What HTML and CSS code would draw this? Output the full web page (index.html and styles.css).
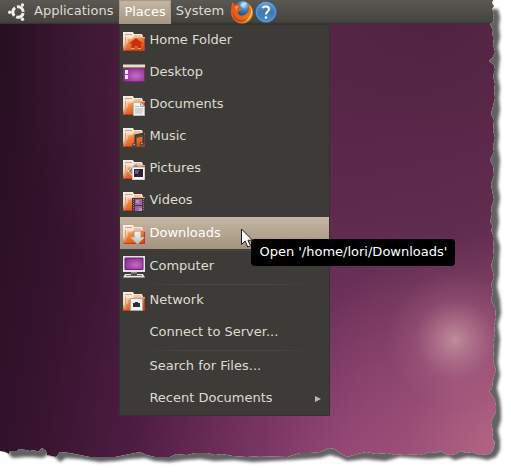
FILE: index.html
```html
<!DOCTYPE html>
<html lang="en">
<head>
<meta charset="utf-8">
<title>Places</title>
<link rel="stylesheet" href="styles.css">
</head>
<body>
<svg class="defs" aria-hidden="true">
  <defs>
    <linearGradient id="front" x1="0" y1="0" x2=".6" y2="1">
      <stop offset="0" stop-color="#f6bd8a"/><stop offset=".45" stop-color="#ea7e3a"/><stop offset="1" stop-color="#d64a12"/>
    </linearGradient>
    <linearGradient id="back" x1="0" y1="0" x2="0" y2="1">
      <stop offset="0" stop-color="#f6efe9"/><stop offset=".6" stop-color="#f0d6c6"/><stop offset="1" stop-color="#c9572a"/>
    </linearGradient>
    <radialGradient id="violet" cx=".6" cy=".6" r=".7">
      <stop offset="0" stop-color="#c56cc4"/><stop offset="1" stop-color="#8a2a90"/>
    </radialGradient>
    <linearGradient id="silver" x1="0" y1="0" x2="0" y2="1">
      <stop offset="0" stop-color="#fafafa"/><stop offset="1" stop-color="#b9b9b9"/>
    </linearGradient>
    <linearGradient id="fox" x1="0" y1="0" x2="1" y2="1">
      <stop offset="0" stop-color="#e2571b"/><stop offset=".6" stop-color="#e8641a"/><stop offset="1" stop-color="#f7b52c"/>
    </linearGradient>
    <radialGradient id="globe" cx=".6" cy=".2" r=".8">
      <stop offset="0" stop-color="#a9d8f2"/><stop offset=".4" stop-color="#3b7fc4"/><stop offset="1" stop-color="#0e2f78"/>
    </radialGradient>
    <linearGradient id="help" x1="0" y1="0" x2="0" y2="1">
      <stop offset="0" stop-color="#6ba0d2"/><stop offset=".5" stop-color="#3d79b8"/><stop offset="1" stop-color="#4c8ac6"/>
    </linearGradient>
    <symbol id="folder" viewBox="0 0 22 22">
      <path d="M0 2h10l1 2h8l1 3v2L3 21H1L0 20z" fill="url(#back)"/>
      <path d="M2 4.500h7M11 6h7" stroke="#ec9a66" fill="none"/>
      <path d="M2.500 7v11" stroke="#e99a6a" fill="none"/>
      <path d="M4 8.500h5l1-1.500h12v14H2.500z" fill="url(#front)"/>
      <path d="M4.500 14V9H9l1-1.500h11.500" fill="none" stroke="#fbd9b9" opacity=".45"/>
      <path d="M2 20.500h20M21.500 9v12" stroke="#c23b12" fill="none"/>
    </symbol>
  </defs>
</svg>

<div class="desktop">
  <nav class="panel" aria-label="Panel">
    <button class="menu-button launcher" type="button">
      <svg class="logo" viewBox="0 0 18 18" aria-hidden="true">
        <circle cx="10" cy="9" r="5.200" fill="none" stroke="#f1efec" stroke-width="3" stroke-dasharray="8.900 2" stroke-dashoffset="-1"/>
        <g fill="#f1efec"><circle cx="1.800" cy="9.200" r="1.800"/><circle cx="14.500" cy="2" r="1.700"/><circle cx="14.500" cy="16.200" r="1.700"/></g>
      </svg>
      <span>Applications</span>
    </button>
    <div class="menu-holder">
      <button class="menu-button open" type="button" aria-expanded="true">Places</button>
      <ul class="menu">
        <li><button class="item" type="button">
          <svg class="icon" viewBox="0 0 22 22" aria-hidden="true"><use href="#folder"/><path d="M13 8l7 5.500h-2V19h-3v-3h-3.500v3h-3v-5.500H6z" fill="#c8300f"/><path d="M8 18.500h3.500M15 18.500h3" stroke="#f4a276"/></svg>
          <span>Home Folder</span></button></li>
        <li><button class="item" type="button">
          <svg class="icon" viewBox="0 0 22 22" aria-hidden="true"><path d="M0 3h22v17H0z" fill="#7d2584"/><path d="M1 6h20v13H1z" fill="url(#violet)"/><path d="M0 2.500h22v3H0z" fill="#e8dfcc"/><path d="M0 5.500h22" stroke="#94865f"/><path d="M2 8h3v4H2zm0 5h3v4H2z" fill="#efe9f0"/></svg>
          <span>Desktop</span></button></li>
        <li><button class="item" type="button">
          <svg class="icon" viewBox="0 0 22 22" aria-hidden="true"><use href="#folder"/><path d="M10.500 8.500h7l4 4v9h-11z" fill="#f3f3f1" stroke="#bdbab5"/><path d="M17.500 8.500v4h4" fill="#d7d5d0" stroke="#aaa"/><path d="M12 12.500h4m-4 2.500h8m-8 2h8m-8 2h7" stroke="#b5b5b5"/></svg>
          <span>Documents</span></button></li>
        <li><button class="item" type="button">
          <svg class="icon" viewBox="0 0 22 22" aria-hidden="true"><use href="#folder"/><path d="M12.500 19V9.500l8-2V18" fill="none" stroke="#3a3835" stroke-width="2"/><path d="M13 11l7-1.500" stroke="#4b4844" stroke-width="2"/><ellipse cx="11.500" cy="19" rx="2.500" ry="2" fill="#4b4a47"/><ellipse cx="19" cy="18" rx="2.500" ry="2" fill="#4b4a47"/><path d="M10.500 18.500h1.500m6-1h1.500" stroke="#b9b9b5"/></svg>
          <span>Music</span></button></li>
        <li><button class="item" type="button">
          <svg class="icon" viewBox="0 0 22 22" aria-hidden="true"><use href="#folder"/><path d="M5 13l8-7.500 5 5-7 9z" fill="#918b86" stroke="#eee" stroke-dasharray="2 1"/><path d="M9.500 9.500h12v12h-12z" fill="#fff" stroke="#d3d0cd"/><path d="M11 11h9v8h-9z" fill="#292232"/><path d="M12 12h4l-1 4h-3z" fill="#715684"/></svg>
          <span>Pictures</span></button></li>
        <li><button class="item" type="button">
          <svg class="icon" viewBox="0 0 22 22" aria-hidden="true"><use href="#folder"/><path d="M9 8h13v14H9z" fill="#45363e"/><path d="M12 9h7v6h-7zm0 7h7v5h-7z" fill="#9a67a5"/><path d="M13 10h3v3h-3zm3 8h3v3h-3z" fill="#bd8cc4"/><path d="M10.500 9v12m10-12v12" stroke="#c77548" stroke-dasharray="1 1"/></svg>
          <span>Videos</span></button></li>
        <li class="current"><button class="item selected" type="button" aria-describedby="tip">
          <svg class="icon" viewBox="0 0 22 22" aria-hidden="true"><use href="#folder"/><path d="M11.500 8.500h6v6H21L14.500 21 8 14.500h3.500z" fill="url(#silver)" stroke="#c5bfb9"/></svg>
          <span>Downloads</span></button>
          <svg class="pointer" viewBox="0 0 12 20" aria-hidden="true"><path d="M.5 1v15.500l3.700-3.500 2.500 6 2.800-1.200-2.600-5.600h4.600z" fill="#fff" stroke="#1c1b1a"/></svg>
          <div class="tooltip" id="tip" role="tooltip">Open '/home/lori/Downloads'</div></li>
        <li class="rule" role="separator"></li>
        <li><button class="item" type="button">
          <svg class="icon" viewBox="0 0 22 22" aria-hidden="true"><path d="M0 0h22v16H0z" fill="#e3e3e1"/><path d="M2 2h18v11.500H2z" fill="url(#violet)" stroke="#702077"/><path d="M8 16h6v2H8z" fill="#8d8c89"/><path d="M2 18h18l2 3.500H0z" fill="#e4e4e2"/><path d="M3 19.500h16" stroke="#777"/><path d="M8 17.500h6v2H8z" fill="#484743"/></svg>
          <span>Computer</span></button></li>
        <li class="rule" role="separator"></li>
        <li><button class="item" type="button">
          <svg class="icon" viewBox="0 0 22 22" aria-hidden="true"><use href="#folder"/><path d="M7.500 8.500h12v12h-12z" fill="#f2f2f0" stroke="#aaa7a2"/><path d="M10 13h2v-1h3v1h2v4h-7z" fill="#30302e"/></svg>
          <span>Network</span></button></li>
        <li><button class="item" type="button"><span class="icon"></span><span>Connect to Server...</span></button></li>
        <li class="rule" role="separator"></li>
        <li><button class="item" type="button"><span class="icon"></span><span>Search for Files...</span></button></li>
        <li><button class="item" type="button" aria-haspopup="true"><span class="icon"></span><span>Recent Documents</span>
          <svg class="arrow" viewBox="0 0 6 6" aria-hidden="true"><path d="M0 0l6 3-6 3z" fill="#bdb9b0"/></svg></button></li>
      </ul>
    </div>
    <button class="menu-button" type="button">System</button>
    <button class="app" type="button" aria-label="Firefox">
      <svg viewBox="0 0 24 24" aria-hidden="true">
        <circle cx="12.500" cy="10" r="9" fill="url(#globe)"/>
        <path d="M12 3c3-1 5 0 5 1l-3 2 1 2-3-1-2-2z" fill="#c6e7f6" opacity=".7"/>
        <path d="M2.500 2l2.500 3c2-1 4-1 5.500-.5L9 7l3 1.500-1 2-3 1c-.5 3 2 4.500 4.500 4 2.500-.5 4-1.500 6-4.500.8-3-.5-6-2-8 4 1.500 6.500 5 6.500 9.500 0 6-5 11-11 11S1 18.500 1 12.500c0-4 .5-7 1.500-10.500z" fill="url(#fox)"/>
        <path d="M18.500 4c3 3 4.500 6 3.500 10-1 4-5 7-9 7 5-2 8-5 8-9 0-3-1-5-2.500-8z" fill="#fac743"/>
        <path d="M3 11c1 6 5 9 10 8.500 3-.3 5-2 6-4-2 6-7 8-11 6-4-1.500-6-5.500-5-10.500z" fill="#c03a16" opacity=".7"/>
        <path d="M5 6.500l4-.5-2 2-.5 3z" fill="#f6a245"/>
      </svg>
    </button>
    <button class="app" type="button" aria-label="Help">
      <svg viewBox="0 0 24 24" aria-hidden="true">
        <circle cx="12" cy="12" r="10.500" fill="url(#help)" stroke="#3168a3"/>
        <circle cx="12" cy="12" r="9.500" fill="none" stroke="#7aaedb" opacity=".7"/>
        <path d="M8.500 8c1-2 6.500-2.500 6.500 1 0 2.500-3 2.500-3 5.500" fill="none" stroke="#fff" stroke-width="2"/><circle cx="12" cy="17.500" r="1.300" fill="#fff"/>
      </svg>
    </button>
  </nav>

  <svg class="torn" viewBox="0 0 511 472" preserveAspectRatio="none" aria-hidden="true">
    <defs>
      <clipPath id="outside"><path d="M493 0L492 3 494 6 492 9 494 13 493 17 494 21 490 24 493 30 492 34 494 38 493 44 495 52 493 57 489 61 494 65 495 70 493 76 495 84 494 90 495 98 493 106 491 114 494 120 493 130 495 138 493 146 494 152 490 160 493 166 494 175 491 184 492 190 494 200 491 208 492 214 490 222 493 226 491 230 494 238 493 247 494 256 491 266 493 272 494 278 491 284 493 292 491 300 495 308 496 318 494 325 495 334 493 342 494 350 493 358 494 364 496 370 493 380 492 388 489 391 494 398 496 405 496 412 491 422 493 432 492 438 495 442 493 450 490 454 480 455 472 452 466 453 460 451 456 454 450 455 445 454 441 451 436 453 430 452 420 455 405 454 395 455 388 453 376 454 366 452 357 454 347 457 340 453 335 449 329 448 320 452 310 453 300 453 287 457 260 456 247 457 233 456 222 454 215 455 208 453 195 453 187 455 176 454 170 457 155 457 147 455 140 452 125 455 115 457 90 457 80 455 70 453 60 452 56 457 47 455 46 451 42 448 38 452 34 450 30 451 26 450 19 449 17 451 10 451 9 454 5 452 0 451V472H511V0z"/></clipPath>
      <filter id="soften" x="-5%" y="-5%" width="110%" height="110%"><feGaussianBlur stdDeviation="1.500"/></filter>
    </defs>
    <g clip-path="url(#outside)">
      <path class="paper" d="M0 0H511V472H0z"/>
      <path class="shade" filter="url(#soften)" d="M480 9H498L500 17 499 27 500 37 498 47 500 57 499 67 498 76 500 88 499 98 500 110 498 122 499 135 498 147 500 160 499 172 498 186 500 198 498 210 499 222 497 235 500 247 499 260 499 274 497 286 500 300 501 313 498 325 500 339 499 350 498 362 500 375 497 388 500 400 501 410 501 420 498 430 500 440 500 450 496 457 488 460 478 458 467 457 455 460 448 457 430 459 415 458 400 457 385 461 365 459 347 461 338 457 330 455 320 458 290 460 253 462 233 460 215 461 200 459 185 460 170 462 155 461 145 458 130 459 115 461 100 462 80 459 66 458 60 462 55 457 47 455 43 458 33 457 25 457 13 458 9 455 9 440H480z"/>
    </g>
  </svg>
</div>
</body>
</html>
```
FILE: styles.css
```css
* {
  box-sizing: border-box;
}

body {
  margin: 0;
  background: #fff;
  color: #dfdbd2;
  font: 13px/16px "DejaVu Sans", sans-serif;
}

button {
  margin: 0;
  border: 0;
  background: none;
  color: inherit;
  font: inherit;
  white-space: nowrap;
}

.defs {
  position: absolute;
  width: 0;
  height: 0;
}

.desktop {
  position: relative;
  min-height: 100vh;
  background:
    radial-gradient(circle at 89% 72%, rgba(208, 165, 170, .75) 0, rgba(200, 145, 160, .55) 3%, rgba(190, 120, 150, .2) 7%, transparent 12%),
    radial-gradient(ellipse at 100% 95%, rgba(186, 106, 134, .9) 0, rgba(170, 90, 125, .45) 15%, transparent 34%),
    radial-gradient(ellipse at 85% 0, rgba(76, 32, 62, .95) 0, rgba(84, 38, 70, .8) 35%, transparent 70%),
    linear-gradient(100deg, #260f20 0, #36132e 18%, #4e1d42 36%, #75335f 55%, #8e4274 72%, #984e7a 100%);
}

.panel {
  display: flex;
  height: 24px;
  background: linear-gradient(#5a5852, #45443e 90%, #33322e);
}

.menu-button {
  display: flex;
  align-items: center;
  height: 24px;
  padding: 0 6px 2px 5px;
}

.launcher {
  gap: 8px;
  padding-left: 8px;
}

.logo {
  width: 18px;
  height: 18px;
  margin-top: 2px;
}

.open {
  border: 1px solid #a99a83;
  border-bottom: 0;
  padding: 0 4px 2px;
  background: linear-gradient(#c3b5a2, #a59680);
  color: #fff;
}

.app {
  width: 24px;
  height: 24px;
  padding: 0;
}

.app svg {
  display: block;
  width: 24px;
  height: 24px;
}

.menu-holder {
  position: relative;
}

.menu {
  position: absolute;
  top: 24px;
  left: 0;
  z-index: 1;
  width: 211px;
  margin: 0;
  padding: 0;
  border: 1px solid #33322e;
  background: #3c3b37;
  list-style: none;
}

.item {
  display: flex;
  align-items: center;
  gap: 4px;
  width: 100%;
  height: 32px;
  padding: 0 8px 0 3px;
  text-align: left;
}

.item > span {
  padding-bottom: 2px;
}

.icon {
  flex: none;
  width: 22px;
  height: 22px;
}

.selected {
  border-top: 1px solid #cbbba5;
  background: linear-gradient(#c4b5a2, #a4947e);
  color: #fff;
}

.current {
  position: relative;
}

.pointer {
  position: absolute;
  top: 11px;
  left: 121px;
  width: 12px;
  height: 20px;
}

.tooltip {
  position: absolute;
  top: 22px;
  left: 131px;
  padding: 5px 8px 6px;
  border-radius: 4px;
  background: #000;
  color: #fff;
  white-space: nowrap;
}

.rule {
  height: 2px;
  background: linear-gradient(to right, transparent 8%, #494843 35%, #494843 70%, transparent 94%) bottom / 100% 1px no-repeat;
}

.arrow {
  width: 6px;
  height: 6px;
  margin-left: auto;
}

.torn {
  position: absolute;
  inset: 0;
  width: 100%;
  height: 100%;
  pointer-events: none;
}

.paper {
  fill: #fff;
}

.shade {
  fill: #626262;
}
```
